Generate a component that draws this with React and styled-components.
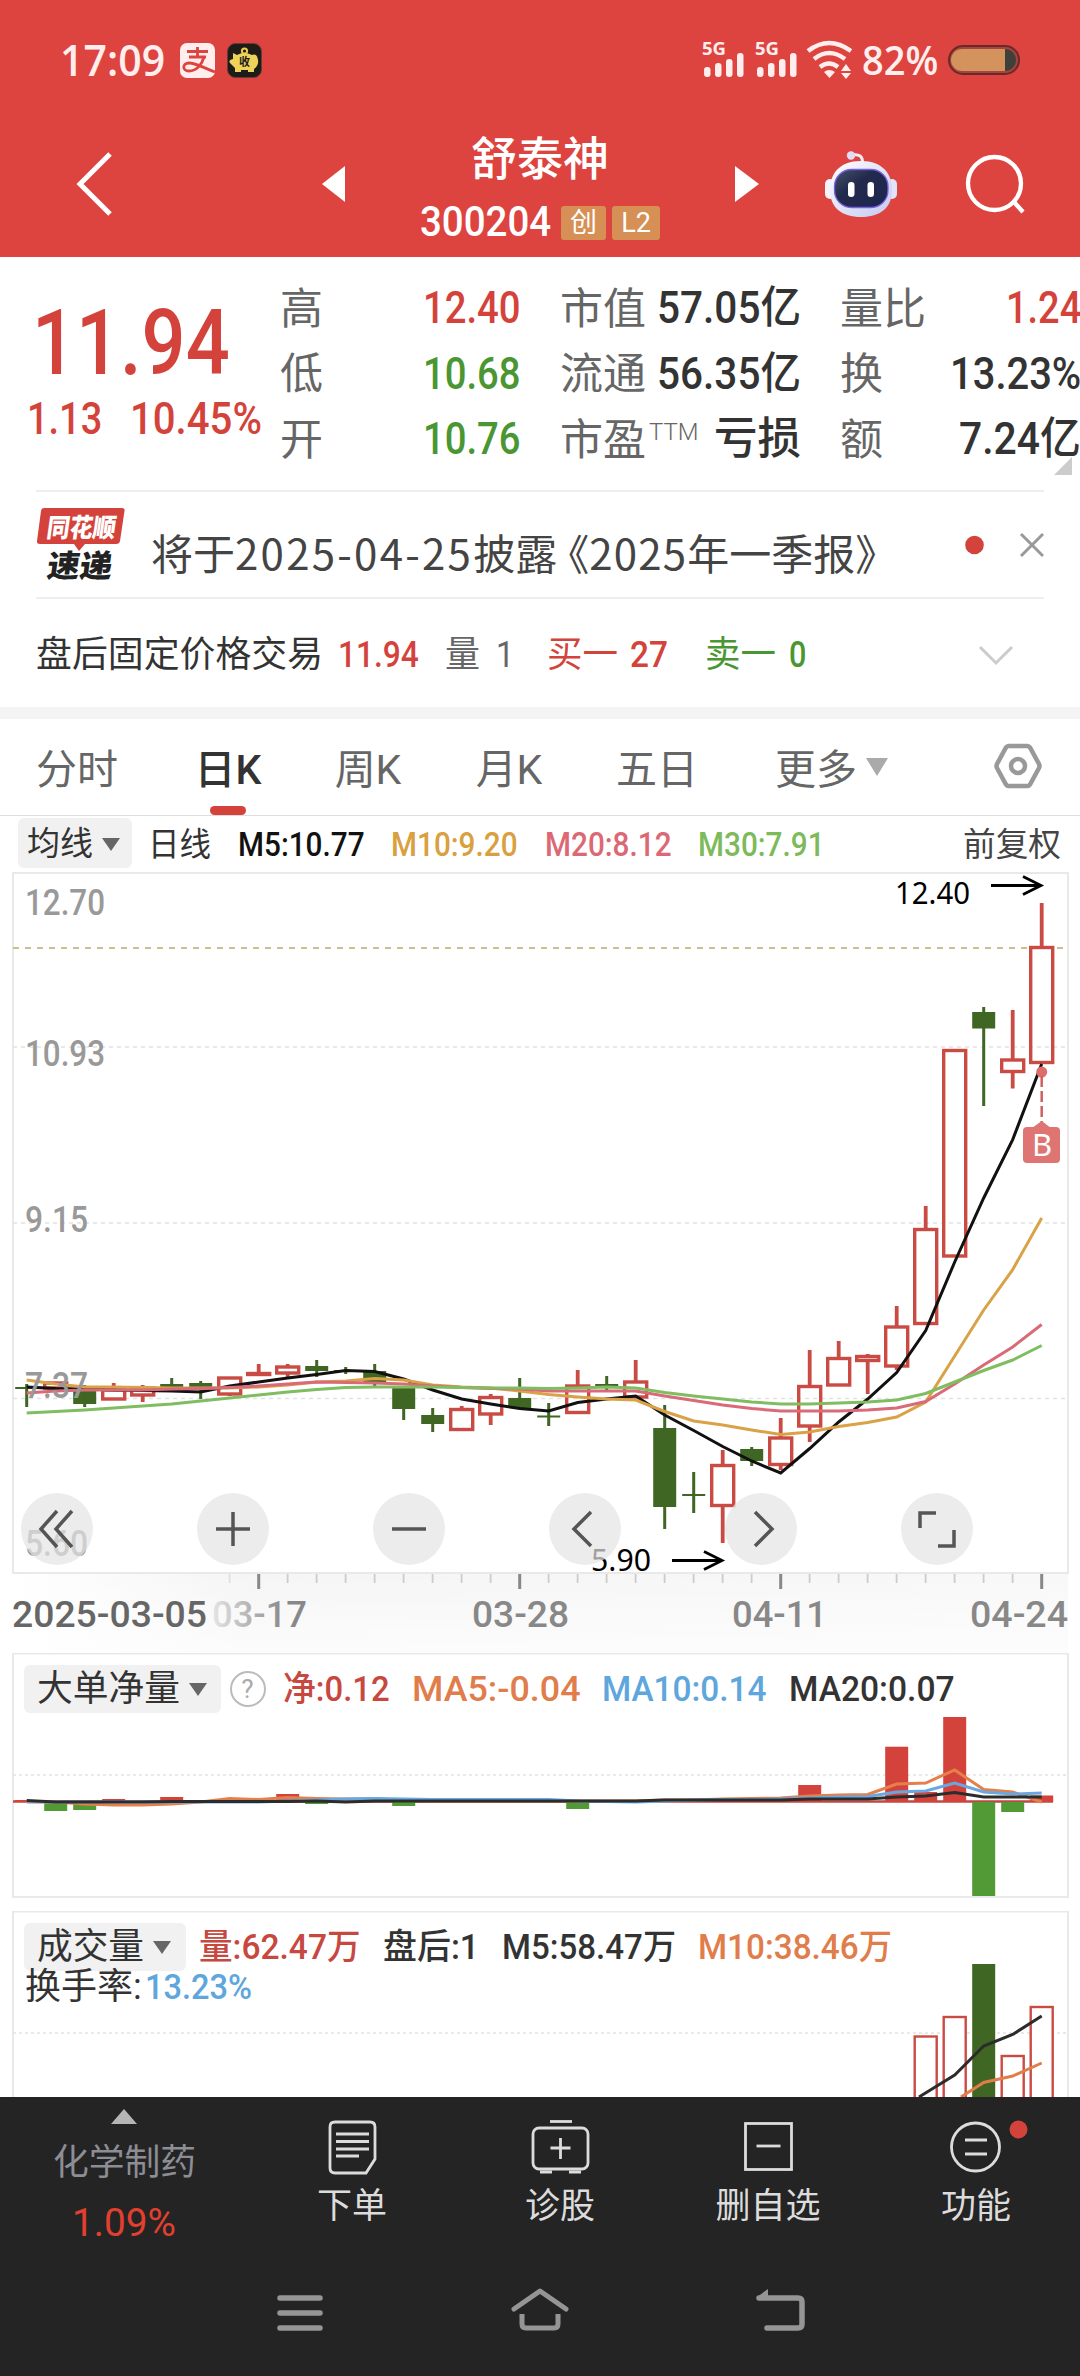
import React, { useLayoutEffect, useRef, useState } from 'react';
import styled, { createGlobalStyle } from 'styled-components'

const red = '#d4433b'
const green = '#4a9632'
const num = `Roboto, "Noto Sans CJK SC", sans-serif`
const cjk = `"Noto Sans CJK SC", sans-serif`

const GlobalStyle = createGlobalStyle`
	* { box-sizing: border-box; }
	body {
		margin: 0;
		background: #fff;
		font-family: ${num};
		color: #333;
	}
	svg { display: block; flex: none; }
`

const Page = styled.div`
	width: 1080px;
	height: 2376px;
	overflow: hidden;
	display: flex;
	flex-direction: column;
	background: #fff;
`

/* text squeezed to a fixed width, the digits here are narrower than Roboto */
const FitBox = styled.span`
	display: block;
	flex: none;
	width: ${p => p.$w}px;
	font-size: ${p => p.$size}px;
	line-height: 1.2;
	font-weight: ${p => p.$weight || 400};
	font-family: ${p => p.$family || num};
	color: ${p => p.$color || 'inherit'};
	white-space: nowrap;
`
const FitInner = styled.span`
	display: inline-block;
	transform-origin: 0 50%;
`

const Fit = ({ w, size, weight, color, family, className, children }) => {
	const ref = useRef()
	const [scale, setScale] = useState(1)

	useLayoutEffect(() => {
		setScale(w / ref.current.offsetWidth)
	}, [w, size, children]);

	return (
		<FitBox className={ className } $w={ w } $size={ size } $weight={ weight } $color={ color } $family={ family }>
			<FitInner ref={ ref } style={{ transform: `scaleX(${ scale })` }}>{ children }</FitInner>
		</FitBox>
	)
}

/* ---------- header ---------- */
const Header = styled.header`
	height: 257px;
	background: #dd443f;
	color: #fff;
`
const StatusBar = styled.div`
	height: 120px;
	padding: 0 60px;
	display: flex;
	align-items: center;
	color: #ffeeed;
`
const StatusIcons = styled.div`
	display: flex;
	gap: 12px;
	margin-left: 15px;
	flex: 1;
`
const StatusRight = styled.div`
	display: flex;
	align-items: center;
	gap: 10px;
`
const TitleRow = styled.div`
	height: 128px;
	display: flex;
	align-items: center;
	padding: 0 55px 0 75px;
`
const BackIcon = styled.svg`
	margin-right: 209px;
`
const TitleBlock = styled.div`
	width: 390px;
	height: 114px;
	margin-top: 9px;
	display: flex;
	flex-direction: column;
	align-items: center;
	justify-content: space-between;
`
const CodeRow = styled.div`
	display: flex;
	align-items: center;
	height: 46px;
	gap: 6px;
`
const Code = styled(Fit)`
	margin-right: 4px;
`
const Tag = styled.span`
	width: ${p => p.$w}px;
	height: 34px;
	border-radius: 3px;
	background: #d68f55;
	font-size: 27px;
	line-height: 35px;
	text-align: center;
`
const Robot = styled.svg`
	margin-left: 66px;
	margin-right: 68px;
`

const Bars = ({ x }) => (
	<g>
		<text x={ x - 2 } y="19" fontSize="18" fontWeight="700" textLength="24" lengthAdjust="spacingAndGlyphs" fontFamily="Open Sans" >5G</text>
		<rect x={ x } y="31" width="6.5" height="10" rx="3" />
		<rect x={ x + 11 } y="27" width="6.5" height="14" rx="3" />
		<rect x={ x + 22 } y="23" width="6.5" height="18" rx="3" />
		<rect x={ x + 33 } y="17" width="6.5" height="24" rx="3" />
	</g>
)

const StatusBarView = () => (
	<StatusBar>
		<Fit w={ 105 } size={ 43 } weight={ 600 } family='"Open Sans"'>17:09</Fit>
		<StatusIcons>
			<svg width="35" height="35" viewBox="0 0 35 35">
				<rect width="35" height="35" rx="7" fill="#ffeeed" />
				<g fill="none" stroke="#dd443f" strokeWidth="2.8">
					<path d="M7 8.5H28M17.5 4V14M9 14H26" />
					<path d="M24 14C22 21 17 28 9 28C2 28 2 20 9 20C16 20 24 25 35 29" />
				</g>
			</svg>
			<svg width="35" height="35" viewBox="0 0 35 35">
				<rect x=".5" y=".5" width="34" height="34" rx="8" fill="#1e1c19" stroke="#6a3a37" />
				<circle cx="17.5" cy="8" r="2.6" fill="none" stroke="#eccb4a" strokeWidth="2" />
				<path d="M6 10L10 12Q17 8 25 12Q30 10 31 17Q32 22 27 26V29H21V27H14V29H8V25Q5 22 3 20Q1 17 6 16Z" fill="#eed25a" />
				<text x="12" y="23" fontSize="11" fontWeight="700" fill="#1e1c19" fontFamily="Noto Sans CJK SC">收</text>
			</svg>
		</StatusIcons>
		<StatusRight>
			<svg width="152" height="48" viewBox="0 0 152 48" fill="#ffeeed">
				<Bars x={ 4 } />
				<Bars x={ 57 } />
				<g fill="none" stroke="#ffeeed" strokeWidth="4.5">
					<path d="M108 15Q129 -1 151 15" />
					<path d="M114 23Q129 11 145 23" />
					<path d="M120 31Q129 24 138 31" />
				</g>
				<path d="M124 36Q129 32 135 36L129.500 42ZM141 35H151L146 28ZM141 37H151L146 43Z" />
			</svg>
			<Fit w={ 76 } size={ 39 } weight={ 600 } family='"Open Sans"'>82%</Fit>
			<svg width="72" height="30" viewBox="0 0 72 30">
				<rect x="1" y="1" width="70" height="28" rx="14" fill="#a5453d" stroke="#6b2a2a" strokeWidth="2" />
				<path d="M14 4H57V26H14A11 11 0 0 1 14 4Z" fill="#d4935c" />
				<path d="M57 4A11 11 0 0 1 57 26Z" fill="#40403a" />
			</svg>
		</StatusRight>
	</StatusBar>
)

const HeaderView = () => (
	<Header>
		<StatusBarView />
		<TitleRow>
			<BackIcon width="38" height="66" viewBox="0 0 38 66">
				<path d="M35 3L5 33L35 63" fill="none" stroke="#fff" strokeWidth="5" />
			</BackIcon>
			<svg width="23" height="36" viewBox="0 0 23 36"><path d="M23 0V36L0 18Z" fill="#fff" /></svg>
			<TitleBlock>
				<Fit w={ 138 } size={ 46 } weight={ 500 } family={ num }>舒泰神</Fit>
				<CodeRow>
					<Code w={ 131 } size={ 42 } weight={ 500 }>300204</Code>
					<Tag $w={ 45 }>创</Tag>
					<Tag $w={ 48 }>L2</Tag>
				</CodeRow>
			</TitleBlock>
			<svg width="24" height="36" viewBox="0 0 24 36"><path d="M0 0V36L24 18Z" fill="#fff" /></svg>
			<Robot width="72" height="68" viewBox="0 0 72 68">
				<defs>
					<linearGradient id="shell" x1="0" y1="0" x2="1" y2="1">
						<stop offset="0" stopColor="#fff" />
						<stop offset="1" stopColor="#c4c8f0" />
					</linearGradient>
					<linearGradient id="visor" x1="0" y1="0" x2="1" y2="1">
						<stop offset="0" stopColor="#48506e" />
						<stop offset=".4" stopColor="#222a4c" />
						<stop offset="1" stopColor="#1c2550" />
					</linearGradient>
				</defs>
				<path d="M27 5Q38 3 37.500 13" fill="none" stroke="#f1ecf8" strokeWidth="3" />
				<circle cx="26" cy="5.500" r="4.200" fill="#e4dcf2" />
				<rect x="0" y="29" width="10" height="20" rx="5" fill="#f4f3fd" />
				<rect x="62" y="29" width="10" height="20" rx="5" fill="#e2e3fa" />
				<path d="M36 11C58 11 67 24 67 40C67 58 55 67 36 67C17 67 5 58 5 40C5 24 14 11 36 11Z" fill="url(#shell)" />
				<rect x="9.500" y="19.500" width="53.500" height="38" rx="17" fill="url(#visor)" stroke="#7a5ee0" strokeWidth="1.300" />
				<rect x="23" y="32" width="6.500" height="15" rx="3.200" fill="#fff" />
				<rect x="42.500" y="32" width="6.500" height="15" rx="3.200" fill="#fff" />
			</Robot>
			<svg width="60" height="60" viewBox="0 0 60 60" fill="none" stroke="#fff" strokeWidth="4.300">
				<circle cx="29.500" cy="29.500" r="26.500" />
				<path d="M48 47L58 58" />
			</svg>
		</TitleRow>
	</Header>
)

/* ---------- quote ---------- */
const Quote = styled.section`
	position: relative;
	height: 233px;
	padding-top: 19px;
	display: flex;
	gap: 39px;
`
const PriceBox = styled.div`
	width: 241px;
	padding: 15px 0 0 27px;
	color: ${red};
`
const Price = styled(Fit)`
	margin-left: 5px;
	line-height: 106px;
`
const Change = styled.div`
	display: flex;
	gap: 28px;
	margin-top: -5px;
`
const QuoteCol = styled.div`
	width: 241px;
	flex: none;
`
const QuoteCell = styled.div`
	height: 65.500px;
	display: flex;
	align-items: center;
	justify-content: space-between;
`
const QuoteLabel = styled.span`
	font-size: 43px;
	line-height: 60px;
	color: #666;
	white-space: nowrap;
`
const Sup = styled.sup`
	display: inline-block;
	font-size: 24px;
	line-height: 20px;
	vertical-align: 15px;
	margin-left: 3px;
	font-weight: 300;
`
const Corner = styled.i`
	position: absolute;
	right: 8px;
	bottom: 15px;
	border-left: 18px solid transparent;
	border-bottom: 18px solid #ccc;
`

const quoteCols = [
	[['高', '12.40', 98, red], ['低', '10.68', 98, green], ['开', '10.76', 98, green]],
	[['市值', '57.05亿', 144], ['流通', '56.35亿', 144], ['市盈', '亏损', 87]],
	[['量比', '1.24', 75, red], ['换', '13.23%', 131], ['额', '7.24亿', 122]],
]

const QuoteView = () => (
	<Quote>
		<PriceBox>
			<Price w={ 198 } size={ 90 } weight={ 500 }>11.94</Price>
			<Change>
				<Fit w={ 75 } size={ 45 } weight={ 500 }>1.13</Fit>
				<Fit w={ 132 } size={ 45 } weight={ 500 }>10.45%</Fit>
			</Change>
		</PriceBox>
		{ quoteCols.map((col, i) => (
			<QuoteCol key={ i }>
				{ col.map(([label, value, w, color]) => (
					<QuoteCell key={ label }>
						<QuoteLabel>{ label }{ label === '市盈' ? <Sup>TTM</Sup> : '' }</QuoteLabel>
						<Fit w={ w } size={ 44.5 } weight={ 500 } color={ color }>{ value }</Fit>
					</QuoteCell>
				)) }
			</QuoteCol>
		)) }
		<Corner />
	</Quote>
)

/* ---------- news + after hours ---------- */
const News = styled.section`
	height: 109px;
	margin: 0 36px;
	border-top: 2px solid #eee;
	border-bottom: 2px solid #eee;
	display: flex;
	align-items: center;
`
const NewsLogo = styled.svg`
	margin-top: -2px;
`
const NewsText = styled.p`
	flex: 1;
	margin: 15px 0 0 25px;
	font-family: ${cjk};
	font-size: 42px;
	line-height: 60px;
	color: #444;
	white-space: nowrap;
`
const Spaced = styled.span`
	letter-spacing: ${p => p.$ls}px;
`
const Bracket = styled.span`
	margin-left: -10px;
`
const AfterHours = styled.section`
	height: 108px;
	padding: 6px 66px 0 36px;
	display: flex;
	align-items: center;
`
const Pair = styled.div`
	display: flex;
	align-items: center;
	gap: ${p => p.$gap}px;
	width: ${p => p.$w}px;
	color: ${p => p.$color};
`
const Divider = styled.div`
	height: 12px;
	background: #f4f4f4;
`

const NewsView = () => (
	<News>
		<NewsLogo width="90" height="88" viewBox="0 -6 90 88">
			<path d="M8 2H86Q89 2 88.500 5L84 35Q83.500 38 80 38H49L43 45L38 38H4Q.5 38 1 35L5 5Q5.500 2 8 2Z" fill={ red } />
			<g transform="skewX(-8)" fontFamily="Noto Sans CJK SC" fontWeight="900">
				<text x="14" y="31" fontSize="26" fill="#fff" textLength="69" lengthAdjust="spacingAndGlyphs">同花顺</text>
				<text x="20" y="71" fontSize="31" fill="#222" textLength="65" lengthAdjust="spacingAndGlyphs">速递</text>
			</g>
		</NewsLogo>
		<NewsText>
			将于<Spaced $ls={ 2.25 }>2025-04-25</Spaced>披露<Bracket>《</Bracket><Spaced $ls={ 1.2 }>2025</Spaced>年一季报》
		</NewsText>
		<svg width="80" height="28" viewBox="0 0 80 28">
			<circle cx="10.500" cy="14" r="9.300" fill={ red } />
			<path d="M57 3L79 25M79 3L57 25" stroke="#999" strokeWidth="3" />
		</svg>
	</News>
)

const AfterHoursView = () => (
	<AfterHours>
		<Pair $w={ 409 } $gap={ 15 }>
			<Fit w={ 287 } size={ 36 }>盘后固定价格交易</Fit>
			<Fit w={ 81 } size={ 36 } weight={ 500 } color={ red }>11.94</Fit>
		</Pair>
		<Pair $w={ 102 } $gap={ 16 } $color="#666">
			<Fit w={ 35 } size={ 36 }>量</Fit>
			<Fit w={ 18 } size={ 36 }>1</Fit>
		</Pair>
		<Pair $w={ 158 } $gap={ 12 } $color={ red }>
			<Fit w={ 71 } size={ 36 }>买一</Fit>
			<Fit w={ 38 } size={ 36 } weight={ 500 }>27</Fit>
		</Pair>
		<Pair $w={ 273 } $gap={ 13 } $color={ green }>
			<Fit w={ 71 } size={ 36 }>卖一</Fit>
			<Fit w={ 17 } size={ 36 } weight={ 500 }>0</Fit>
		</Pair>
		<svg width="36" height="22" viewBox="0 0 36 22"><path d="M2 2L18 18L34 2" fill="none" stroke="#ccc" strokeWidth="3" /></svg>
	</AfterHours>
)

/* ---------- tabs ---------- */
const Tabs = styled.nav`
	height: 97px;
	padding: 0 36px;
	display: flex;
	border-bottom: 1px solid #ddd;
`
const Tab = styled.div`
	height: 96px;
	width: ${p => p.$w}px;
	margin-right: ${p => p.$gap}px;
	flex: none;
	display: flex;
	flex-direction: column;
	align-items: center;
	justify-content: space-between;
	font-size: 41px;
	line-height: 102px;
	white-space: nowrap;
	color: ${p => p.$on ? '#333' : '#666'};
	font-weight: ${p => p.$on ? 500 : 400};
	&::after {
		content: '';
		width: 36px;
		height: 9px;
		flex: none;
		border-radius: 5px;
		background: ${p => p.$on ? red : 'transparent'};
	}
`
const TabText = styled.span`
	height: 87px;
`
const Caret = styled.i`
	flex: none;
	border: ${p => p.$s}px solid transparent;
	border-top: ${p => p.$h}px solid ${p => p.$color || '#666'};
	border-bottom: 0;
`
const MoreCaret = styled(Caret)`
	align-self: center;
	margin-right: 105px;
`
const GearIcon = styled.svg`
	align-self: center;
	margin-top: -2px;
`

const tabs = [['分时', 82, 77], ['日K', 66, 72], ['周K', 70, 71], ['月K', 70, 72], ['五日', 82, 77], ['更多', 82, 9]]

const TabsView = () => (
	<Tabs>
		{ tabs.map(([name, w, gap]) => <Tab key={ name } $w={ w } $gap={ gap } $on={ name === '日K' }><TabText>{ name }</TabText></Tab>) }
		<MoreCaret $s={ 11 } $h={ 18 } $color="#aaa" />
		<GearIcon width="50" height="46" viewBox="0 0 50 46" fill="none" stroke="#999" strokeWidth="4.500">
			<path d="M15.500 3H34.500Q36 3 37 4.500L46 21Q47 23 46 25L37 41.500Q36 43 34.500 43H15.500Q14 43 13 41.500L4 25Q3 23 4 21L13 4.500Q14 3 15.500 3Z" />
			<circle cx="25" cy="23" r="7" />
		</GearIcon>
	</Tabs>
)

/* ---------- indicator legends ---------- */
const Legend = styled.div`
	height: 56px;
	padding: 1px 19px 0 18px;
	display: flex;
	align-items: center;
	gap: 26.500px;
`
const Picker = styled.div`
	flex: none;
	width: ${p => p.$w}px;
	height: ${p => p.$h}px;
	padding-left: ${p => p.$pad}px;
	margin-right: ${p => p.$mr || 0}px;
	border-radius: 6px;
	background: #f1f1f1;
	display: flex;
	align-items: center;
	gap: 9px;
`
const LegendPicker = styled(Picker)`
	margin-top: -4px;
	padding-top: 3px;
`
const PanelPicker = styled(Picker)`
	margin-top: -3px;
	padding-top: 2px;
`
const Spacer = styled.div`
	flex: 1;
`
const Panel = styled.section`
	display: grid;
	height: ${p => p.$h}px;
	overflow: hidden;
	> * { grid-area: 1 / 1; }
`
const PanelHead = styled.div`
	position: relative;
	padding: 13px 0 0 24px;
`
const PanelRow = styled.div`
	display: flex;
	align-items: center;
	gap: ${p => p.$gap}px;
	height: 48px;
`
const RateRow = styled.div`
	display: flex;
	align-items: center;
	gap: 3px;
	height: 32px;
	padding-left: 1px;
`
const Help = styled.span`
	flex: none;
	width: 36px;
	height: 36px;
	margin: -2px -4px 0 -13px;
	border: 2px solid #bbb;
	border-radius: 50%;
	color: #aaa;
	font-size: 26px;
	line-height: 33px;
	text-align: center;
`

const LegendView = () => (
	<Legend>
		<LegendPicker $w={ 114 } $h={ 50 } $pad={ 9 } $mr={ -10.5 }>
			<Fit w={ 66 } size={ 33 }>均线</Fit>
			<Caret $s={ 9 } $h={ 13 } />
		</LegendPicker>
		<Fit w={ 63 } size={ 33 }>日线</Fit>
		<Fit w={ 127 } size={ 33 } weight={ 500 } color="#111">M5:10.77</Fit>
		<Fit w={ 127 } size={ 33 } weight={ 500 } color="#d9a040">M10:9.20</Fit>
		<Fit w={ 127 } size={ 33 } weight={ 500 } color="#db6874">M20:8.12</Fit>
		<Fit w={ 127 } size={ 33 } weight={ 500 } color="#7dba5a">M30:7.91</Fit>
		<Spacer />
		<Fit w={ 98 } size={ 33 } color="#444">前复权</Fit>
	</Legend>
)

/* ---------- K line ---------- */
const cx = i => 26.7 + i * 29

// [direction, body top, body bottom, high, low]
const candles = [
	['g', 1387, 1389, 1384, 1407], ['r', 1383, 1388, 1382, 1389], ['g', 1389, 1404, 1385, 1407],
	['r', 1390, 1399, 1383, 1400], ['r', 1388, 1395, 1385, 1402], ['g', 1384, 1387, 1378, 1388],
	['g', 1383, 1388, 1381, 1399], ['r', 1378, 1394, 1377, 1396], ['r', 1373.500, 1374.500, 1364, 1376],
	['r', 1367, 1373, 1364, 1377], ['g', 1366, 1371, 1360, 1377], ['g', 1370, 1372, 1367, 1374],
	['g', 1371, 1383, 1364, 1386], ['g', 1387, 1409, 1387, 1420], ['g', 1415, 1424, 1408, 1432],
	['r', 1409.500, 1429.500, 1406, 1430], ['r', 1397.500, 1414, 1394, 1425], ['g', 1398, 1408, 1378, 1408],
	['g', 1415.500, 1417.500, 1403, 1426], ['r', 1386, 1412.500, 1370, 1413], ['g', 1384, 1386, 1376, 1390],
	['r', 1382, 1397, 1360, 1398], ['g', 1428, 1507, 1405, 1529], ['g', 1494, 1496, 1472, 1513],
	['r', 1465.500, 1505.500, 1450, 1543], ['g', 1449, 1461, 1447, 1466], ['r', 1438, 1464.500, 1418, 1470],
	['r', 1386.500, 1426, 1350, 1442], ['r', 1358.500, 1385, 1341, 1386], ['r', 1356.500, 1360.500, 1354, 1394],
	['r', 1327, 1366, 1306, 1370], ['r', 1229.500, 1323.500, 1206, 1325], ['r', 1050.500, 1256, 1050, 1257],
	['g', 1012, 1028.500, 1007, 1106], ['r', 1060, 1071.500, 1010, 1088.500], ['r', 947.500, 1062.500, 903, 1063],
]

const ma5 = [1387, 1388.500, 1389, 1390, 1390.500, 1391, 1392, 1386, 1382, 1378, 1374.500, 1370.500, 1371.500, 1379, 1390, 1399, 1404, 1408.500, 1411, 1402.500, 1399, 1396, 1415, 1430.500, 1446.500, 1461, 1473, 1448.500, 1422, 1399, 1372.500, 1330.500, 1262, 1198, 1139.600, 1064]
const ma10 = [1380, 1384, 1387, 1387, 1387.500, 1388, 1388, 1388, 1387, 1385, 1382, 1381, 1378.500, 1380, 1385, 1387, 1388, 1391, 1394.500, 1397, 1399, 1400, 1411.500, 1421, 1425, 1430, 1434.500, 1432, 1426.500, 1422.500, 1417, 1402, 1356, 1310, 1269.600, 1218]
const ma20 = [1393, 1391, 1390, 1390, 1390, 1389, 1388.500, 1387.500, 1386, 1384, 1382, 1382.500, 1383, 1384, 1386, 1387.500, 1388.500, 1389, 1391, 1391, 1391, 1391, 1396, 1400.500, 1405, 1408.500, 1411, 1411, 1411, 1410, 1408, 1401.500, 1384, 1365, 1347, 1324.500]
const ma30 = [1413, 1411.500, 1410, 1408, 1406, 1404, 1401, 1398, 1395, 1392, 1389.500, 1387.500, 1387, 1387, 1387, 1387.500, 1388, 1388, 1388.500, 1388, 1387, 1388, 1392.500, 1396, 1399, 1402, 1404, 1404, 1403, 1402, 1400, 1393.500, 1382, 1370.500, 1360, 1345.500]

const Line = ({ data, color, from = 0 }) => (
	<polyline points={ data.map((y, i) => `${ cx(i + from) },${ y }`).join(' ') } fill="none" stroke={ color } strokeWidth="3" />
)

const Candle = ({ x, d }) => {
	const [dir, top, bottom, high, low] = d
	if(dir === 'g') return (
		<g fill="#3f6723">
			<rect x={ x - 11.5 } y={ top } width="23" height={ bottom - top } />
			<rect x={ x - 1.5 } y={ high } width="3" height={ low - high } />
		</g>
	)
	return (
		<g stroke="#c94b44" strokeWidth="3.4" fill="none">
			<path d={ `M${ x } ${ high }V${ top }M${ x } ${ bottom }V${ low }` } strokeWidth="3.800" />
			<rect x={ x - 11 } y={ top } width="22" height={ bottom - top } />
		</g>
	)
}

const AxisText = styled.text`
	font-family: ${num};
	font-size: 36px;
	font-weight: 500;
`
const Tools = styled.div`
	position: relative;
	align-self: start;
	display: flex;
	gap: 104px;
	padding: 621px 0 0 21px;
`
const Tool = styled.div`
	width: 72px;
	height: 72px;
	border-radius: 50%;
	background: rgba(228, 228, 228, .7);
	display: flex;
	align-items: center;
	justify-content: center;
`
const toolPaths = [
	'M36 18L20 36L36 54M51 18L35 36L51 54',
	'M19 36H53M36 19V53',
	'M19 36H53',
	'M42 19L25 36L42 53',
	'M30 19L47 36L30 53',
	'M19 35V20H35M37 53H53V37',
]
const yLabels = [['12.70', 915, 80], ['10.93', 1066, 80], ['9.15', 1232, 63], ['7.37', 1398, 63], ['5.60', 1556, 63]]
const xLabels = [['03-17', 212, 95], ['03-28', 472, 97], ['04-11', 732, 95], ['04-24', 970, 98]]

const KLineView = () => (
	<Panel $h={ 781 }>
		<svg width="1080" height="781" viewBox="0 872 1080 781">
			<defs>
				<linearGradient id="axisBg" x1="0" x2="1">
					<stop offset="0" stopColor="#f5f5f5" stopOpacity="0" />
					<stop offset=".22" stopColor="#f5f5f5" />
					<stop offset="1" stopColor="#f8f8f8" />
				</linearGradient>
				<linearGradient id="axisFade" x1="0" x2="0" y1="0" y2="1">
					<stop offset="0" stopColor="#fff" stopOpacity="0" />
					<stop offset="1" stopColor="#fff" stopOpacity=".7" />
				</linearGradient>
				<linearGradient id="labelFade" gradientUnits="userSpaceOnUse" x1="205" x2="285" y1="0" y2="0">
					<stop offset="0" stopColor="#888" stopOpacity=".1" />
					<stop offset="1" stopColor="#888" />
				</linearGradient>
			</defs>
			<rect x="12" y="1574" width="1056" height="79" fill="url(#axisBg)" />
			<rect x="12" y="1574" width="1056" height="79" fill="url(#axisFade)" />
			<rect x="13" y="873" width="1055" height="700" fill="none" stroke="#e9e9e9" strokeWidth="2" />
			<path d="M13 1047H1067M13 1223H1067M13 1398.500H1067" stroke="#e2e2e2" strokeWidth="1.500" strokeDasharray="4 4" />
			<path d="M13 948H1067" stroke="#bda968" strokeWidth="1.700" strokeDasharray="6 6" />
			{ candles.map((d, i) => <Candle key={ i } x={ cx(i) } d={ d } />) }
			<Line data={ ma5 } color="#111" />
			<Line data={ ma10 } color="#d9a247" />
			<Line data={ ma20 } color="#d96a78" />
			<Line data={ ma30 } color="#7fbd60" />
			{ yLabels.map(([v, y, w]) => <AxisText key={ v } x="25" y={ y } fill="#999" textLength={ w } lengthAdjust="spacingAndGlyphs">{ v }</AxisText>) }

			<circle cx={ cx(35) } cy="1072" r="5.500" fill="#de6c68" />
			<path d={ `M${ cx(35) } 1076V1122` } stroke="#d0605c" strokeWidth="2.500" strokeDasharray="11 4" />
			<path d="M1032 1128L1041.700 1121L1051 1128Z" fill="#de7572" />
			<rect x="1023" y="1127" width="37" height="36" rx="4" fill="#de7572" />
			<text x="1032" y="1156" fontSize="31" fill="#fff" fontFamily="Noto Sans">B</text>

			<g fontFamily="Noto Sans" fontSize="31" fill="#000">
				<text x="895" y="904" textLength="75" lengthAdjust="spacingAndGlyphs">12.40</text>
				<text x="591" y="1571" textLength="60" lengthAdjust="spacingAndGlyphs">5.90</text>
			</g>
			<g fill="none" stroke="#000" strokeWidth="2.800">
				<path d="M991 885.500H1041M1023 876.500L1041 885.500L1023 894.500" />
				<path d="M672 1560.500H722M704 1551.500L722 1560.500L704 1569.500" />
			</g>

			{ candles.map((d, i) => {
				if(i < 7) return null
				const major = i % 9 === 8
				return <rect key={ i } x={ cx(i) - (major ? 1.5 : 1) } y="1574" width={ major ? 3 : 1.8 } height={ major ? 15 : 9 } fill={ major ? '#888' : '#ccc' } opacity={ i === 7 ? .5 : 1 } />
			}) }
			<AxisText x="12" y="1627" fill="#666" textLength="195" lengthAdjust="spacingAndGlyphs">2025-03-05</AxisText>
			{ xLabels.map(([v, x, w], i) => <AxisText key={ v } x={ x } y="1627" fill={ i ? '#888' : 'url(#labelFade)' } textLength={ w } lengthAdjust="spacingAndGlyphs">{ v }</AxisText>) }
		</svg>
		<Tools>
			{ toolPaths.map(d => (
				<Tool key={ d }>
					<svg width="72" height="72" viewBox="0 0 72 72"><path d={ d } fill="none" stroke="#555" strokeWidth="3.500" /></svg>
				</Tool>
			)) }
		</Tools>
	</Panel>
)

/* ---------- net big orders ---------- */
// [index, y] measured from the zero line at 1802
const flows = [[0, 1800], [1, 1811], [2, 1810], [3, 1799], [5, 1797], [9, 1794], [10, 1804], [13, 1806], [19, 1809], [27, 1785], [30, 1746.700], [31, 1792], [32, 1717], [33, 1896], [34, 1812], [35, 1795.500]]
const flow5 = [1802, 1802, 1804, 1805, 1805, 1804, 1802, 1798.500, 1799.500, 1797.500, 1798.500, 1799, 1799, 1800, 1801, 1801.500, 1801.500, 1801, 1801, 1801, 1801, 1801, 1800, 1800, 1799, 1798.500, 1798, 1796, 1795, 1794.500, 1784, 1783, 1770, 1789.500, 1792, 1802]
const flow10 = [1801.500, 1802, 1802, 1802, 1802, 1802, 1802, 1802, 1802, 1801, 1800, 1799, 1798.500, 1799, 1799.500, 1799.500, 1799.500, 1799.500, 1799.500, 1801, 1801.500, 1802, 1801, 1800, 1799.500, 1799.500, 1799, 1798, 1797, 1796.500, 1792, 1791, 1783, 1792, 1794, 1793]
const flow20 = [1800.500, 1802, 1802, 1802, 1802, 1801.500, 1801.500, 1801.500, 1801.500, 1801.500, 1801, 1802, 1801, 1801, 1801, 1801, 1801, 1801, 1801, 1801, 1801, 1801, 1800, 1800, 1800, 1800, 1800, 1799, 1799, 1799, 1797, 1796, 1792.500, 1797, 1797, 1797]

const FlowView = () => (
	<Panel $h={ 258 }>
		<svg width="1080" height="258" viewBox="0 1653 1080 258">
			<rect x="13" y="1653.500" width="1055" height="243.500" fill="#fff" stroke="#e9e9e9" strokeWidth="2" />
			<path d="M13 1775H1067" stroke="#e2e2e2" strokeWidth="1.500" strokeDasharray="3 3" />
			<path d="M13 1801.500H1053" stroke="#c0473f" strokeWidth="2.500" />
			{ flows.map(([i, y]) => (
				<rect key={ i } x={ cx(i) - 11.5 } y={ Math.min(y, 1802) } width="23" height={ Math.abs(1802 - y) } fill={ y > 1802 ? '#529a35' : red } />
			)) }
			<Line data={ flow5 } color="#e3804c" />
			<Line data={ flow10 } color="#68a8e0" />
			<Line data={ flow20 } color="#2c2c2c" />
		</svg>
		<PanelHead>
			<PanelRow $gap={ 21.5 }>
				<PanelPicker $w={ 197 } $h={ 48 } $pad={ 13 }>
					<Fit w={ 143 } size={ 36 }>大单净量</Fit>
					<Caret $s={ 9 } $h={ 13 } />
				</PanelPicker>
				<Help>?</Help>
				<Fit w={ 107 } size={ 35 } weight={ 500 } color="#c6483f">净:0.12</Fit>
				<Fit w={ 169 } size={ 35 } weight={ 500 } color="#e07d4a">MA5:-0.04</Fit>
				<Fit w={ 165 } size={ 35 } weight={ 500 } color="#5ea6dc">MA10:0.14</Fit>
				<Fit w={ 166 } size={ 35 } weight={ 500 }>MA20:0.07</Fit>
			</PanelRow>
		</PanelHead>
	</Panel>
)

/* ---------- volume ---------- */
const volumes = [[31, 2036.500], [32, 2017], [34, 2056], [35, 2007]]

const VolumeView = () => (
	<Panel $h={ 186 }>
		<svg width="1080" height="186" viewBox="0 1911 1080 186">
			<rect x="13" y="1911.500" width="1055" height="240" fill="none" stroke="#e9e9e9" strokeWidth="2" />
			<path d="M13 2033H1067" stroke="#e2e2e2" strokeWidth="1.500" strokeDasharray="3 3" />
			{ volumes.map(([i, y]) => <rect key={ i } x={ cx(i) - 11 } y={ y } width="22" height="120" fill="#fff" stroke="#c94b44" strokeWidth="2.400" />) }
			<rect x={ cx(33) - 11.5 } y="1964" width="23" height="140" fill="#3f6723" />
			<polyline points={ `919,2097 ${ cx(32) },2075 ${ cx(33) },2046 ${ cx(34) },2034.500 ${ cx(35) },2016` } fill="none" stroke="#2c2c2c" strokeWidth="3" />
			<polyline points={ `961,2097 ${ cx(33) },2082.500 ${ cx(34) },2076 ${ cx(35) },2063` } fill="none" stroke="#e07d4a" strokeWidth="3" />
		</svg>
		<PanelHead>
			<PanelRow $gap={ 22.5 }>
				<PanelPicker $w={ 162 } $h={ 48 } $pad={ 13 } $mr={ -10 }>
					<Fit w={ 107 } size={ 36 }>成交量</Fit>
					<Caret $s={ 9 } $h={ 13 } />
				</PanelPicker>
				<Fit w={ 162 } size={ 35 } weight={ 500 } color="#c6483f">量:62.47万</Fit>
				<Fit w={ 96 } size={ 35 } weight={ 500 }>盘后:1</Fit>
				<Fit w={ 174 } size={ 35 } weight={ 500 }>M5:58.47万</Fit>
				<Fit w={ 194 } size={ 35 } weight={ 500 } color="#e07d4a">M10:38.46万</Fit>
			</PanelRow>
			<RateRow>
				<Fit w={ 117 } size={ 36 }>换手率:</Fit>
				<Fit w={ 107 } size={ 35 } color="#5ea6dc" weight={ 500 }>13.23%</Fit>
			</RateRow>
		</PanelHead>
	</Panel>
)

/* ---------- bottom ---------- */
const Footer = styled.footer`
	height: 279px;
	background: #242424;
	color: #dcdcdc;
`
const FooterTabs = styled.div`
	display: grid;
	grid-template-columns: 248px repeat(4, 208px);
	height: 150px;
`
const Sector = styled.div`
	display: flex;
	flex-direction: column;
	align-items: center;
	padding-top: 12px;
	color: #8d8d95;
`
const Up = styled.i`
	border: 13.500px solid transparent;
	border-bottom: 15px solid #b5b5b5;
	border-top: 0;
	margin-bottom: 18px;
`
const Rate = styled(Fit)`
	margin-top: 16px;
`
const FooterTab = styled.div`
	display: flex;
	flex-direction: column;
	align-items: center;
	padding-top: 19px;
	font-size: 35px;
	line-height: 50px;
	gap: 6px;
`
const SystemNav = styled.div`
	padding: 38px 274px 0;
	display: flex;
	justify-content: space-between;
`

const footerTabs = [
	['下单', <g key="a"><path d="M15 6H50Q55 6 55 11V43L46 57H15Q10 57 10 52V11Q10 6 15 6Z" /><path d="M16 18H49M16 25.500H49M16 33H49M16 40H39" /></g>],
	['诊股', <g key="b"><path d="M22 5.500H44" /><rect x="5" y="12" width="55" height="41" rx="6" /><path d="M32.500 22V43M22.500 32H42.500M12 56H24M41 56H53" /></g>],
	['删自选', <g key="c"><rect x="9.500" y="7.500" width="46" height="46" /><path d="M20.500 30H44.500" /></g>],
	['功能', <g key="d"><circle cx="31.500" cy="31" r="24" /><path d="M21 24H43M21 38H43" /><circle cx="74.500" cy="13.500" r="9" fill={ red } stroke="none" /></g>],
]

const FooterView = () => (
	<Footer>
		<FooterTabs>
			<Sector>
				<Up />
				<Fit w={ 143 } size={ 36 }>化学制药</Fit>
				<Rate w={ 104 } size={ 38 } color="#e2402f">1.09%</Rate>
			</Sector>
			{ footerTabs.map(([name, icon]) => (
				<FooterTab key={ name }>
					<svg width="65" height="60" viewBox="0 0 65 60" overflow="visible" fill="none" stroke="#dcdcdc" strokeWidth="2.800">{ icon }</svg>
					<span>{ name }</span>
				</FooterTab>
			)) }
		</FooterTabs>
		<SystemNav>
			<svg width="52" height="50" viewBox="0 0 52 50" stroke="#959595" strokeWidth="5.500" strokeLinecap="round">
				<path d="M6 13H46M6 28H46M6 43H46" />
			</svg>
			<svg width="60" height="50" viewBox="0 0 60 50" fill="none" stroke="#959595" strokeWidth="5" strokeLinecap="round" strokeLinejoin="round">
				<path d="M4 24L30 6L56 24" />
				<path d="M12 29V39Q12 43 16 43H44Q48 43 48 39V29" strokeLinecap="butt" />
			</svg>
			<svg width="52" height="50" viewBox="0 0 52 50" fill="none" stroke="#959595" strokeWidth="5.500" strokeLinejoin="round">
				<path d="M5 13H44Q48 13 48 17V39Q48 43 44 43H13" strokeLinecap="round" />
				<path d="M3 12L14 4V13Z" fill="#959595" stroke="none" />
			</svg>
		</SystemNav>
	</Footer>
)

const App = () => (
	<Page>
		<GlobalStyle />
		<HeaderView />
		<QuoteView />
		<NewsView />
		<AfterHoursView />
		<Divider />
		<TabsView />
		<LegendView />
		<KLineView />
		<FlowView />
		<VolumeView />
		<FooterView />
	</Page>
)

export default App
